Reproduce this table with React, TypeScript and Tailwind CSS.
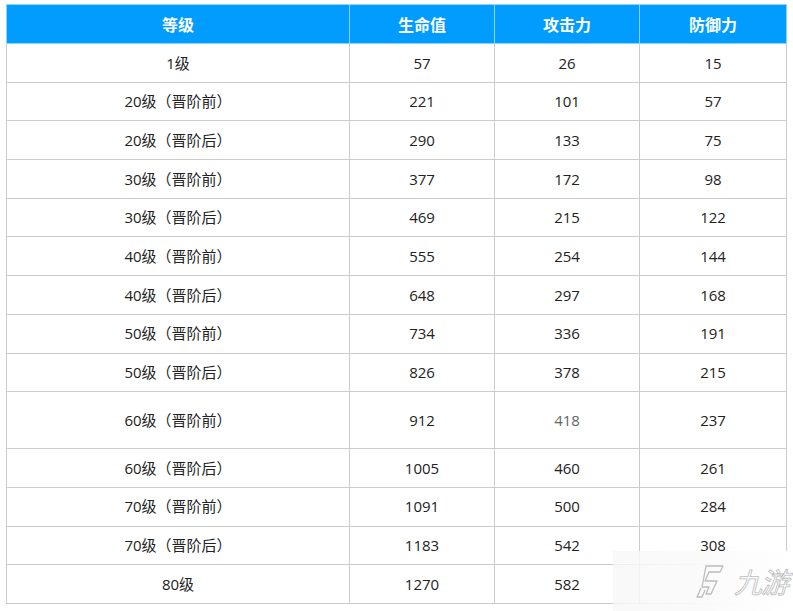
const rows: [string, string, string, string][] = [
  ["1级", "57", "26", "15"],
  ["20级（晋阶前）", "221", "101", "57"],
  ["20级（晋阶后）", "290", "133", "75"],
  ["30级（晋阶前）", "377", "172", "98"],
  ["30级（晋阶后）", "469", "215", "122"],
  ["40级（晋阶前）", "555", "254", "144"],
  ["40级（晋阶后）", "648", "297", "168"],
  ["50级（晋阶前）", "734", "336", "191"],
  ["50级（晋阶后）", "826", "378", "215"],
  ["60级（晋阶前）", "912", "418", "237"],
  ["60级（晋阶后）", "1005", "460", "261"],
  ["70级（晋阶前）", "1091", "500", "284"],
  ["70级（晋阶后）", "1183", "542", "308"],
  ["80级", "1270", "582", ""],
];

export default function App() {
  return (
    <div className="relative w-[793px] h-[611px] bg-white overflow-hidden font-['Open_Sans','Noto_Sans_CJK_SC',sans-serif]">
      <div className="pt-[4px] pl-[6px]">
        <table className="w-[780px] border-collapse table-fixed text-[15px] text-[#222]">
          <colgroup>
            <col className="w-[343px]" />
            <col className="w-[145px]" />
            <col className="w-[145px]" />
            <col className="w-[147px]" />
          </colgroup>
          <thead>
            <tr className="h-[39px] bg-[#009cff] text-white font-bold text-[16px] font-['Noto_Sans_CJK_SC',sans-serif]">
              <th className="border border-[#8fd3ff]">等级</th>
              <th className="border border-[#8fd3ff]">生命值</th>
              <th className="border border-[#8fd3ff]">攻击力</th>
              <th className="border border-[#8fd3ff]">防御力</th>
            </tr>
          </thead>
          <tbody>
            {rows.map((r, i) => (
              <tr key={i} className={i === 9 ? "h-[57px]" : "h-[38.7px]"}>
                <td className="border border-[#cccccc] text-center">{r[0]}</td>
                <td className="border border-[#cccccc] text-center">{r[1]}</td>
                <td className={"border border-[#cccccc] text-center " + (i === 9 ? "text-[#666]" : "")}>{r[2]}</td>
                <td className="border border-[#cccccc] text-center">{r[3]}</td>
              </tr>
            ))}
          </tbody>
        </table>
      </div>

      {/* 水印 */}
      <div className="absolute left-[613px] top-[551px] w-[180px] h-[60px] bg-gradient-to-r from-[#f7f7f7]/80 via-[#fafafa]/95 to-white flex items-center justify-end pr-[5px] gap-[10px]">
        <svg width="28" height="34" viewBox="0 0 28 34" fill="none" stroke="#bcbcbc" strokeWidth="1.3" strokeLinejoin="round">
          <path d="M10 2 L27 2 L24 8 L13 8 L9 17 L21 17 L15 30 L10 30 L13 23 L6 23 Z" />
          <path d="M5 24 L1 33 L6 33 L9 26" />
        </svg>
        <span
          className="text-[28px] italic leading-none text-transparent tracking-[-1px] font-['Noto_Sans_CJK_SC',sans-serif]"
          style={{ WebkitTextStroke: "0.8px #bcbcbc" }}
        >
          九游
        </span>
      </div>
    </div>
  );
}
